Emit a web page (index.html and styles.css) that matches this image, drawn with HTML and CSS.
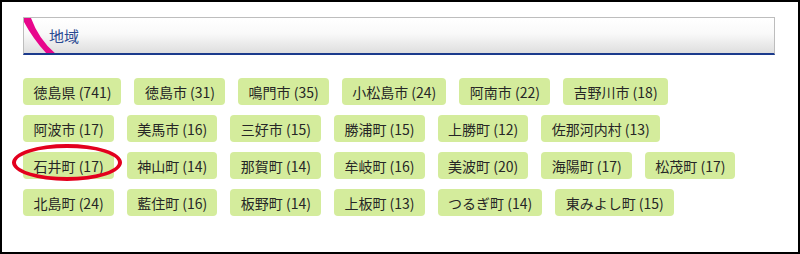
FILE: index.html
```html
<!DOCTYPE html>
<html lang="ja">
<head>
<meta charset="utf-8">
<title>地域</title>
<link rel="stylesheet" href="styles.css">
</head>
<body>
<div class="frame">
  <div class="header">
    <svg class="stripe" width="40" height="36" viewBox="0 0 40 36" aria-hidden="true">
      <path d="M0,0 L7,0 Q15,22 32,36 L23,36 Q9,21 0,4 Z" fill="#e8068c"/>
    </svg>
    <h2 class="title">地域</h2>
  </div>
  <ul class="tags">
    <li class="tag">徳島県 (741)</li>
    <li class="tag">徳島市 (31)</li>
    <li class="tag">鳴門市 (35)</li>
    <li class="tag">小松島市 (24)</li>
    <li class="tag">阿南市 (22)</li>
    <li class="tag">吉野川市 (18)</li>
    <li class="tag">阿波市 (17)</li>
    <li class="tag">美馬市 (16)</li>
    <li class="tag">三好市 (15)</li>
    <li class="tag">勝浦町 (15)</li>
    <li class="tag">上勝町 (12)</li>
    <li class="tag">佐那河内村 (13)</li>
    <li class="tag marked">石井町 (17)</li>
    <li class="tag">神山町 (14)</li>
    <li class="tag">那賀町 (14)</li>
    <li class="tag">牟岐町 (16)</li>
    <li class="tag">美波町 (20)</li>
    <li class="tag">海陽町 (17)</li>
    <li class="tag">松茂町 (17)</li>
    <li class="tag">北島町 (24)</li>
    <li class="tag">藍住町 (16)</li>
    <li class="tag">板野町 (14)</li>
    <li class="tag">上板町 (13)</li>
    <li class="tag">つるぎ町 (14)</li>
    <li class="tag">東みよし町 (15)</li>
  </ul>
</div>
</body>
</html>
```

FILE: styles.css
```css
html, body {
  margin: 0;
  padding: 0;
  background: #fff;
}
.frame {
  box-sizing: border-box;
  width: 800px;
  height: 254px;
  border: 2px solid #000;
  padding: 15px 23px 0 21px;
  font-family: "Noto Sans CJK JP", "Noto Sans", sans-serif;
}
.header {
  position: relative;
  box-sizing: border-box;
  height: 38px;
  border: 1px solid #bdbdbd;
  border-bottom: 2px solid #1b3a8c;
  background: linear-gradient(to bottom, #ffffff 0%, #f9f9f9 45%, #dedede 100%);
  display: flex;
  align-items: center;
  padding-left: 25px;
  overflow: hidden;
}
.stripe {
  position: absolute;
  left: 0;
  top: 0;
}
.title {
  margin: 0;
  font-size: 15px;
  font-weight: normal;
  color: #2a4a92;
  line-height: 20px;
  position: relative;
}
.tags {
  list-style: none;
  margin: 23px 0 0 0;
  padding: 0;
  width: 735px;
  display: flex;
  flex-wrap: wrap;
  column-gap: 13px;
  row-gap: 10px;
}
.tag {
  position: relative;
  box-sizing: border-box;
  height: 27px;
  padding: 0 10px 0 10.5px;
  display: flex;
  align-items: center;
  background: #d4ec9c;
  border-radius: 4px;
  color: #262626;
  font-size: 14px;
  white-space: nowrap;
}
.marked::after {
  content: "";
  position: absolute;
  left: -11px;
  top: -8px;
  width: 102px;
  height: 29px;
  border: 4px solid #e3001e;
  border-radius: 50%;
}
```
